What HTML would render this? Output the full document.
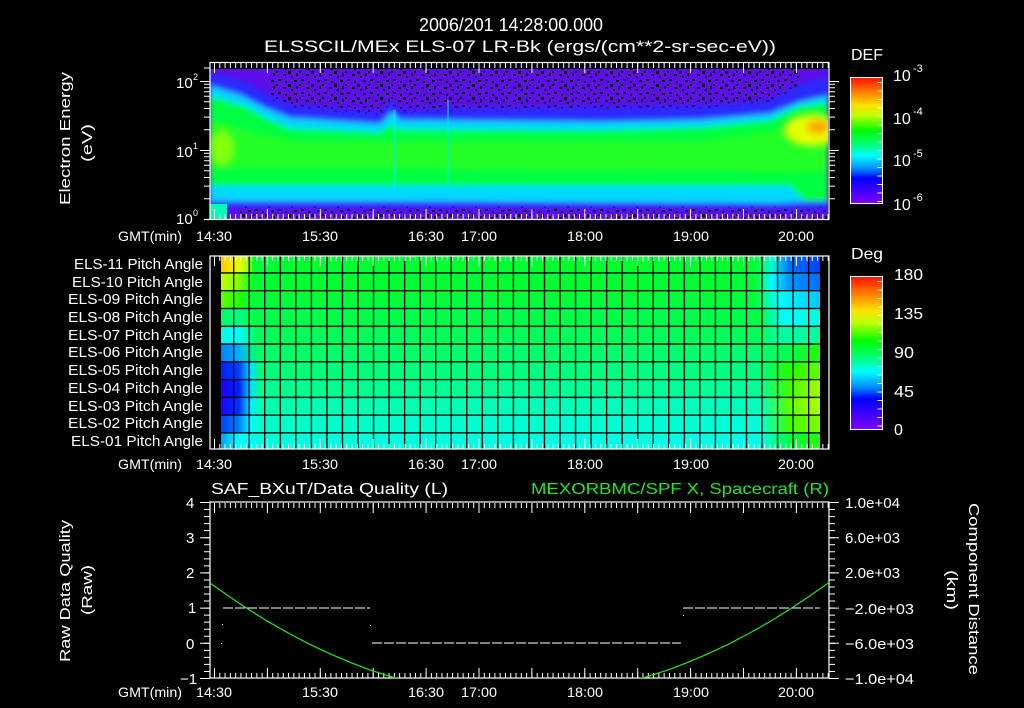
<!DOCTYPE html>
<html><head><meta charset="utf-8"><style>
html,body{margin:0;padding:0;background:#000;}
svg{display:block}
text{font-family:"Liberation Sans",sans-serif;fill:#fff;}
</style></head><body>
<svg width="1024" height="708" viewBox="0 0 1024 708" xmlns="http://www.w3.org/2000/svg">
<defs>
<filter id="bl" x="-5%" y="-20%" width="110%" height="140%"><feGaussianBlur stdDeviation="2.5 3"/></filter>
<filter id="bl2" x="-20%" y="-20%" width="140%" height="140%"><feGaussianBlur stdDeviation="4"/></filter>
<clipPath id="c1"><rect x="210" y="69" width="618" height="150"/></clipPath>
<clipPath id="c3"><rect x="210" y="502" width="619" height="176"/></clipPath>
<pattern id="spk" patternUnits="userSpaceOnUse" width="23" height="13">
<rect x="2" y="1" width="3" height="2" fill="#000"/><rect x="12" y="6" width="3" height="3" fill="#000"/><rect x="18" y="2" width="3" height="2" fill="#000"/><rect x="7" y="9" width="3" height="2" fill="#000"/><rect x="15" y="11" width="2" height="2" fill="#000"/><rect x="0" y="6" width="2" height="2" fill="#000"/><rect x="9" y="3" width="2" height="2" fill="#000"/><rect x="20" y="8" width="2" height="3" fill="#000"/>
</pattern>
<pattern id="gv" patternUnits="userSpaceOnUse" x="233" y="0" width="15.54" height="10"><rect x="0" y="0" width="1.3" height="10" fill="#000"/></pattern>
<pattern id="gh" patternUnits="userSpaceOnUse" x="0" y="272.3" width="10" height="17.77"><rect x="0" y="0" width="10" height="1.3" fill="#000"/></pattern>
<linearGradient id="cbar" x1="0" y1="0" x2="0" y2="1">
<stop offset="0" stop-color="#ff1000"/><stop offset="0.1" stop-color="#ff7000"/><stop offset="0.22" stop-color="#ffe000"/><stop offset="0.3" stop-color="#c0ff00"/><stop offset="0.42" stop-color="#00ff00"/><stop offset="0.55" stop-color="#00ff90"/><stop offset="0.62" stop-color="#00ffff"/><stop offset="0.72" stop-color="#0090ff"/><stop offset="0.8" stop-color="#0000ff"/><stop offset="1" stop-color="#8000ff"/>
</linearGradient>
<linearGradient id="r11" gradientUnits="userSpaceOnUse" x1="221" x2="820"><stop offset="0" stop-color="#ffc800"/><stop offset="0.03" stop-color="#e8ff00"/><stop offset="0.045" stop-color="#a0ff00"/><stop offset="0.055" stop-color="#00ff30"/><stop offset="0.89" stop-color="#00ff30"/><stop offset="0.92" stop-color="#00ffd0"/><stop offset="0.95" stop-color="#0070ff"/><stop offset="1" stop-color="#0040ff"/></linearGradient>
<linearGradient id="r10" gradientUnits="userSpaceOnUse" x1="221" x2="820"><stop offset="0" stop-color="#c0ff00"/><stop offset="0.03" stop-color="#80ff00"/><stop offset="0.055" stop-color="#00ff30"/><stop offset="0.89" stop-color="#00ff30"/><stop offset="0.92" stop-color="#00ffff"/><stop offset="0.95" stop-color="#0090ff"/><stop offset="1" stop-color="#0070ff"/></linearGradient>
<linearGradient id="r9" gradientUnits="userSpaceOnUse" x1="221" x2="820"><stop offset="0" stop-color="#60ff00"/><stop offset="0.03" stop-color="#20ff00"/><stop offset="0.055" stop-color="#00ff38"/><stop offset="0.89" stop-color="#00ff38"/><stop offset="0.93" stop-color="#00ffff"/><stop offset="1" stop-color="#00c8ff"/></linearGradient>
<linearGradient id="r8" gradientUnits="userSpaceOnUse" x1="221" x2="820"><stop offset="0" stop-color="#00ff60"/><stop offset="0.03" stop-color="#00ff80"/><stop offset="0.055" stop-color="#00ff48"/><stop offset="0.9" stop-color="#00ff48"/><stop offset="0.94" stop-color="#00ffff"/><stop offset="1" stop-color="#00ffe0"/></linearGradient>
<linearGradient id="r7" gradientUnits="userSpaceOnUse" x1="221" x2="820"><stop offset="0" stop-color="#00ffe0"/><stop offset="0.03" stop-color="#00ffff"/><stop offset="0.06" stop-color="#00ff58"/><stop offset="0.9" stop-color="#00ff58"/><stop offset="0.93" stop-color="#00ffa0"/><stop offset="1" stop-color="#00ffa0"/></linearGradient>
<linearGradient id="r6" gradientUnits="userSpaceOnUse" x1="221" x2="820"><stop offset="0" stop-color="#0080ff"/><stop offset="0.03" stop-color="#00b0ff"/><stop offset="0.06" stop-color="#00ff68"/><stop offset="0.9" stop-color="#00ff70"/><stop offset="0.95" stop-color="#00ff50"/><stop offset="1" stop-color="#20ff00"/></linearGradient>
<linearGradient id="r5" gradientUnits="userSpaceOnUse" x1="221" x2="820"><stop offset="0" stop-color="#0020ff"/><stop offset="0.03" stop-color="#0040ff"/><stop offset="0.05" stop-color="#00e0ff"/><stop offset="0.065" stop-color="#00ff78"/><stop offset="0.9" stop-color="#00ff80"/><stop offset="0.95" stop-color="#20ff00"/><stop offset="1" stop-color="#60ff00"/></linearGradient>
<linearGradient id="r4" gradientUnits="userSpaceOnUse" x1="221" x2="820"><stop offset="0" stop-color="#2000ff"/><stop offset="0.03" stop-color="#0020ff"/><stop offset="0.05" stop-color="#00e0ff"/><stop offset="0.065" stop-color="#00ff90"/><stop offset="0.9" stop-color="#00ff98"/><stop offset="0.95" stop-color="#40ff00"/><stop offset="1" stop-color="#a8ff00"/></linearGradient>
<linearGradient id="r3" gradientUnits="userSpaceOnUse" x1="221" x2="820"><stop offset="0" stop-color="#2000ff"/><stop offset="0.03" stop-color="#0030ff"/><stop offset="0.05" stop-color="#00f0ff"/><stop offset="0.065" stop-color="#00ffb0"/><stop offset="0.9" stop-color="#00ffc0"/><stop offset="0.95" stop-color="#60ff00"/><stop offset="1" stop-color="#b0ff00"/></linearGradient>
<linearGradient id="r2" gradientUnits="userSpaceOnUse" x1="221" x2="820"><stop offset="0" stop-color="#0040ff"/><stop offset="0.03" stop-color="#0080ff"/><stop offset="0.05" stop-color="#00ffff"/><stop offset="0.065" stop-color="#00ffc8"/><stop offset="0.9" stop-color="#00ffd8"/><stop offset="0.95" stop-color="#40ff00"/><stop offset="1" stop-color="#80ff00"/></linearGradient>
<linearGradient id="r1" gradientUnits="userSpaceOnUse" x1="221" x2="820"><stop offset="0" stop-color="#00a0ff"/><stop offset="0.03" stop-color="#00ffff"/><stop offset="0.065" stop-color="#00ffdc"/><stop offset="0.9" stop-color="#00ffe8"/><stop offset="0.95" stop-color="#00ff40"/><stop offset="1" stop-color="#20ff00"/></linearGradient>
</defs>

<!-- titles -->
<text x="419" y="31" font-size="18" textLength="184" lengthAdjust="spacingAndGlyphs">2006/201 14:28:00.000</text>
<text x="264" y="52" font-size="17" textLength="512" lengthAdjust="spacingAndGlyphs">ELSSCIL/MEx ELS-07 LR-Bk  (ergs/(cm**2-sr-sec-eV))</text>

<!-- TOP PANEL spectrogram -->
<g clip-path="url(#c1)">
<rect x="210" y="69" width="618" height="150" fill="#5e0ee8"/>
<rect x="270" y="69" width="530" height="50" fill="url(#spk)"/>
<rect x="240" y="206" width="588" height="13" fill="url(#spk)"/>
<g filter="url(#bl)">
<polygon fill="#2a2aff" points="210,72 240,80 270,95 290,105 380,112 392,100 400,110 450,108 700,106 770,100 800,84 828,76 828,210 700,208 210,208"/>
<polygon fill="#00d8ff" points="210,86 240,95 265,108 290,118 380,124 392,112 400,120 600,122 700,120 770,114 800,102 828,96 828,200 780,203 400,201 210,201"/>
<polygon fill="#00ff40" points="210,96 245,106 270,120 290,128 380,132 392,124 400,129 600,130 700,127 770,120 800,106 828,102 828,201 805,201 790,186 700,186 400,186 210,186"/>
<polygon fill="#40ff10" opacity="0.55" points="210,120 250,132 300,142 700,142 780,130 828,120 828,172 700,170 300,168 210,168"/>
</g>
<g filter="url(#bl2)">
<ellipse cx="812" cy="130" rx="28" ry="16" fill="#e8ff00"/>
<ellipse cx="818" cy="127" rx="12" ry="7" fill="#ffa000"/>
<ellipse cx="222" cy="148" rx="12" ry="18" fill="#b0ff00" opacity="0.7"/>
</g>
<rect x="393" y="110" width="3" height="80" fill="#00e8ff" opacity="0.6"/>
<rect x="447" y="100" width="2" height="90" fill="#00e8ff" opacity="0.5"/>
<rect x="210" y="204" width="17" height="15" fill="#00ffb0"/>
</g>
<!-- top panel frame/ticks -->
<g stroke="#fff">
<rect x="210" y="62.5" width="619" height="157" fill="none" stroke-width="1.2"/>
<line x1="204" y1="219.5" x2="210" y2="219.5" stroke-width="1.2"/>
<line x1="214" y1="65.5" x2="829" y2="65.5" stroke-width="5" stroke-dasharray="1 4.29"/>
<line x1="214" y1="68" x2="829" y2="68" stroke-width="10" stroke-dasharray="1 51.9"/>
<line x1="214" y1="216.5" x2="829" y2="216.5" stroke-width="5" stroke-dasharray="1 4.29"/>
<line x1="214" y1="214" x2="829" y2="214" stroke-width="10" stroke-dasharray="1 51.9"/>
</g>
<path stroke="#fff" stroke-width="1" d="M200,81.5H210M200,150.5H210M204,219.5H210M204,198.7H210M204,186.1H210M204,177.5H210M204,170.8H210M204,165.3H210M204,160.7H210M204,156.7H210M204,153.2H210M204,129.7H210M204,117.1H210M204,108.5H210M204,101.8H210M204,96.3H210M204,91.7H210M204,87.7H210M204,84.2H210M204,68H210
M829,81.5H839M829,150.5H839M829,129.7H835M829,117.1H835M829,108.5H835M829,101.8H835M829,96.3H835M829,91.7H835M829,87.7H835M829,84.2H835M829,198.7H835M829,186.1H835M829,177.5H835M829,170.8H835M829,165.3H835M829,160.7H835M829,156.7H835M829,153.2H835"/>
<text x="176" y="88" font-size="15">10</text><text x="193" y="80" font-size="9">2</text>
<text x="176" y="157" font-size="15">10</text><text x="193" y="149" font-size="9">1</text>
<text x="176" y="224" font-size="15">10</text><text x="193" y="216" font-size="9">0</text>
<text transform="translate(70,205) rotate(-90)" font-size="15" textLength="133" lengthAdjust="spacingAndGlyphs">Electron Energy</text>
<text transform="translate(92,162) rotate(-90)" font-size="15" textLength="38" lengthAdjust="spacingAndGlyphs">(eV)</text>

<!-- time labels -->
<g font-size="14">
<text x="118" y="241" textLength="64" lengthAdjust="spacingAndGlyphs">GMT(min)</text>
<text x="196" y="241" textLength="36" lengthAdjust="spacingAndGlyphs">14:30</text>
<text x="302" y="241" textLength="36" lengthAdjust="spacingAndGlyphs">15:30</text>
<text x="408" y="241" textLength="36" lengthAdjust="spacingAndGlyphs">16:30</text>
<text x="461" y="241" textLength="36" lengthAdjust="spacingAndGlyphs">17:00</text>
<text x="567" y="241" textLength="36" lengthAdjust="spacingAndGlyphs">18:00</text>
<text x="673" y="241" textLength="36" lengthAdjust="spacingAndGlyphs">19:00</text>
<text x="778" y="241" textLength="36" lengthAdjust="spacingAndGlyphs">20:00</text>

<text x="118" y="469" textLength="64" lengthAdjust="spacingAndGlyphs">GMT(min)</text>
<text x="196" y="469" textLength="36" lengthAdjust="spacingAndGlyphs">14:30</text>
<text x="302" y="469" textLength="36" lengthAdjust="spacingAndGlyphs">15:30</text>
<text x="408" y="469" textLength="36" lengthAdjust="spacingAndGlyphs">16:30</text>
<text x="461" y="469" textLength="36" lengthAdjust="spacingAndGlyphs">17:00</text>
<text x="567" y="469" textLength="36" lengthAdjust="spacingAndGlyphs">18:00</text>
<text x="673" y="469" textLength="36" lengthAdjust="spacingAndGlyphs">19:00</text>
<text x="778" y="469" textLength="36" lengthAdjust="spacingAndGlyphs">20:00</text>

<text x="118" y="697" textLength="64" lengthAdjust="spacingAndGlyphs">GMT(min)</text>
<text x="196" y="697" textLength="36" lengthAdjust="spacingAndGlyphs">14:30</text>
<text x="302" y="697" textLength="36" lengthAdjust="spacingAndGlyphs">15:30</text>
<text x="408" y="697" textLength="36" lengthAdjust="spacingAndGlyphs">16:30</text>
<text x="461" y="697" textLength="36" lengthAdjust="spacingAndGlyphs">17:00</text>
<text x="567" y="697" textLength="36" lengthAdjust="spacingAndGlyphs">18:00</text>
<text x="673" y="697" textLength="36" lengthAdjust="spacingAndGlyphs">19:00</text>
<text x="778" y="697" textLength="36" lengthAdjust="spacingAndGlyphs">20:00</text>
</g>

<!-- DEF colorbar -->
<text x="851" y="60" font-size="16" textLength="32" lengthAdjust="spacingAndGlyphs">DEF</text>
<rect x="850.5" y="77.5" width="32" height="126" fill="url(#cbar)" stroke="#fff" stroke-width="1"/>
<line x1="880" y1="82" x2="880" y2="202" stroke="#fff" stroke-width="5" stroke-dasharray="1 7.5"/>
<g font-size="16">
<text x="893" y="81">10</text><text x="913" y="72" font-size="11">-3</text>
<text x="893" y="124">10</text><text x="913" y="115" font-size="11">-4</text>
<text x="893" y="166">10</text><text x="913" y="157" font-size="11">-5</text>
<text x="893" y="210">10</text><text x="913" y="201" font-size="11">-6</text>
</g>

<!-- MIDDLE PANEL -->
<rect x="221" y="256" width="599" height="16.3" fill="url(#r11)"/>
<rect x="221" y="272.3" width="599" height="17.8" fill="url(#r10)"/>
<rect x="221" y="290.1" width="599" height="17.8" fill="url(#r9)"/>
<rect x="221" y="307.8" width="599" height="17.8" fill="url(#r8)"/>
<rect x="221" y="325.6" width="599" height="17.8" fill="url(#r7)"/>
<rect x="221" y="343.4" width="599" height="17.8" fill="url(#r6)"/>
<rect x="221" y="361.2" width="599" height="17.8" fill="url(#r5)"/>
<rect x="221" y="378.9" width="599" height="17.8" fill="url(#r4)"/>
<rect x="221" y="396.7" width="599" height="17.8" fill="url(#r3)"/>
<rect x="221" y="414.5" width="599" height="17.8" fill="url(#r2)"/>
<rect x="221" y="432.3" width="599" height="16.7" fill="url(#r1)"/>
<rect x="221" y="256" width="599" height="193" fill="url(#gv)"/>
<rect x="221" y="256" width="599" height="193" fill="url(#gh)"/>
<g stroke="#fff">
<rect x="210" y="256" width="619" height="193" fill="none" stroke-width="1.2"/>
<line x1="214" y1="258.5" x2="829" y2="258.5" stroke-width="5" stroke-dasharray="1 4.29"/>
<line x1="214" y1="261" x2="829" y2="261" stroke-width="10" stroke-dasharray="1 51.9"/>
<line x1="214" y1="446.5" x2="829" y2="446.5" stroke-width="5" stroke-dasharray="1 4.29"/>
<line x1="214" y1="444" x2="829" y2="444" stroke-width="10" stroke-dasharray="1 51.9"/>
</g>
<g font-size="14.5" text-anchor="end">
<text x="203" y="269" textLength="129" lengthAdjust="spacingAndGlyphs">ELS-11 Pitch Angle</text>
<text x="203" y="287" textLength="131" lengthAdjust="spacingAndGlyphs">ELS-10 Pitch Angle</text>
<text x="203" y="304" textLength="135" lengthAdjust="spacingAndGlyphs">ELS-09 Pitch Angle</text>
<text x="203" y="322" textLength="135" lengthAdjust="spacingAndGlyphs">ELS-08 Pitch Angle</text>
<text x="203" y="340" textLength="135" lengthAdjust="spacingAndGlyphs">ELS-07 Pitch Angle</text>
<text x="203" y="357" textLength="135" lengthAdjust="spacingAndGlyphs">ELS-06 Pitch Angle</text>
<text x="203" y="375" textLength="135" lengthAdjust="spacingAndGlyphs">ELS-05 Pitch Angle</text>
<text x="203" y="393" textLength="135" lengthAdjust="spacingAndGlyphs">ELS-04 Pitch Angle</text>
<text x="203" y="411" textLength="135" lengthAdjust="spacingAndGlyphs">ELS-03 Pitch Angle</text>
<text x="203" y="428" textLength="135" lengthAdjust="spacingAndGlyphs">ELS-02 Pitch Angle</text>
<text x="203" y="446" textLength="132" lengthAdjust="spacingAndGlyphs">ELS-01 Pitch Angle</text>
</g>

<!-- Deg colorbar -->
<text x="851" y="259" font-size="16" textLength="32" lengthAdjust="spacingAndGlyphs">Deg</text>
<rect x="850.5" y="276.5" width="32" height="153" fill="url(#cbar)" stroke="#fff" stroke-width="1"/>
<line x1="880" y1="281" x2="880" y2="428" stroke="#fff" stroke-width="5" stroke-dasharray="1 7.5"/>
<g font-size="16">
<text x="894" y="280" textLength="29" lengthAdjust="spacingAndGlyphs">180</text>
<text x="894" y="319" textLength="29" lengthAdjust="spacingAndGlyphs">135</text>
<text x="894" y="358" textLength="20" lengthAdjust="spacingAndGlyphs">90</text>
<text x="894" y="397" textLength="20" lengthAdjust="spacingAndGlyphs">45</text>
<text x="894" y="435">0</text>
</g>

<!-- BOTTOM PANEL -->
<text x="211" y="494" font-size="16" textLength="237" lengthAdjust="spacingAndGlyphs">SAF_BXuT/Data Quality (L)</text>
<text x="531" y="494" font-size="16" textLength="298" lengthAdjust="spacingAndGlyphs" style="fill:#22e622">MEXORBMC/SPF X, Spacecraft (R)</text>
<g stroke="#fff">
<rect x="210" y="502" width="619" height="176" fill="none" stroke-width="1.2"/>
<line x1="214" y1="505.5" x2="829" y2="505.5" stroke-width="5" stroke-dasharray="1 4.29"/>
<line x1="214" y1="508" x2="829" y2="508" stroke-width="10" stroke-dasharray="1 51.9"/>
<line x1="214" y1="675.5" x2="829" y2="675.5" stroke-width="5" stroke-dasharray="1 4.29"/>
<line x1="214" y1="673" x2="829" y2="673" stroke-width="10" stroke-dasharray="1 51.9"/>
<line x1="207" y1="502" x2="207" y2="679" stroke-width="6" stroke-dasharray="1 6.04"/>
<line x1="832" y1="502" x2="832" y2="679" stroke-width="6" stroke-dasharray="1 6.04"/>
</g>
<path stroke="#fff" stroke-width="1" d="M200,502.5H210M200,537.7H210M200,572.9H210M200,608.1H210M200,643.3H210M200,678.5H210M829,502.5H839M829,537.7H839M829,572.9H839M829,608.1H839M829,643.3H839M829,678.5H839"/>
<g font-size="15">
<text x="186" y="508">4</text><text x="186" y="543">3</text><text x="186" y="578">2</text><text x="188" y="613">1</text><text x="186" y="649">0</text><text x="180" y="684">−1</text>
<text x="845" y="508" textLength="55" lengthAdjust="spacingAndGlyphs">1.0e+04</text>
<text x="845" y="543" textLength="55" lengthAdjust="spacingAndGlyphs">6.0e+03</text>
<text x="845" y="578" textLength="55" lengthAdjust="spacingAndGlyphs">2.0e+03</text>
<text x="845" y="614" textLength="69" lengthAdjust="spacingAndGlyphs">−2.0e+03</text>
<text x="845" y="649" textLength="69" lengthAdjust="spacingAndGlyphs">−6.0e+03</text>
<text x="845" y="684" textLength="69" lengthAdjust="spacingAndGlyphs">−1.0e+04</text>
</g>
<text transform="translate(70,662) rotate(-90)" font-size="15" textLength="142" lengthAdjust="spacingAndGlyphs">Raw Data Quality</text>
<text transform="translate(92,615) rotate(-90)" font-size="15" textLength="50" lengthAdjust="spacingAndGlyphs">(Raw)</text>
<text transform="translate(969,503) rotate(90)" font-size="15" textLength="172" lengthAdjust="spacingAndGlyphs">Component Distance</text>
<text transform="translate(947,570) rotate(90)" font-size="15" textLength="40" lengthAdjust="spacingAndGlyphs">(km)</text>
<g stroke="#fff" stroke-width="1">
<line x1="223" y1="608" x2="370" y2="608" stroke-dasharray="10 2"/>
<line x1="372" y1="643" x2="681" y2="643" stroke-dasharray="10 2"/>
<line x1="683" y1="608" x2="820" y2="608" stroke-dasharray="10 2"/>
</g>
<rect x="222" y="624" width="1" height="1" fill="#fff"/><rect x="221" y="643" width="1" height="1" fill="#fff"/><rect x="370" y="625" width="1" height="1" fill="#fff"/><rect x="683" y="615" width="1" height="1" fill="#fff"/>
<g clip-path="url(#c3)">
<polyline fill="none" stroke="#22e622" stroke-width="1.2" points="210,583 230,597.1 250,610.4 270,622.7 290,634 310,644.4 330,653.8 350,662.3 370,669.9 395,678 519,696 643,678 668,669.9 688,662.3 708,653.8 728,644.4 748,634 768,622.7 788,610.4 808,597.1 829,582.5"/>
</g>
</svg>
</body></html>
